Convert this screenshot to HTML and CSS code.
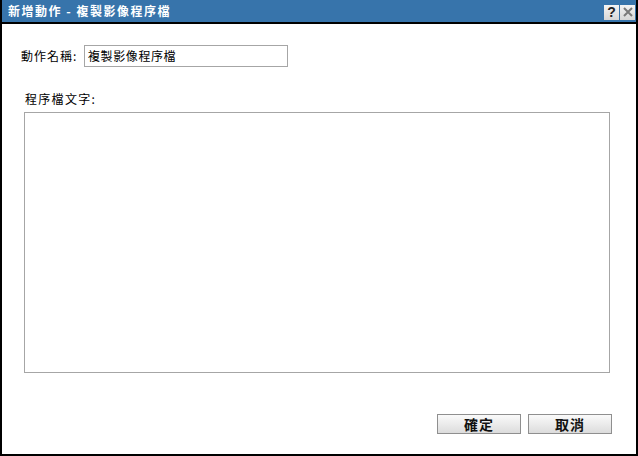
FILE: index.html
```html
<!DOCTYPE html>
<html>
<head>
<meta charset="utf-8">
<link rel="stylesheet" href="styles.css">
</head>
<body>
<div class="dialog">
  <div class="titlebar">
    <span class="title">新增動作 - 複製影像程序檔</span>
    <div class="tools">
      <span class="tool help">?</span>
      <span class="tool close"><svg width="12" height="12" viewBox="0 0 12 12"><path d="M2 2 L10 10 M10 2 L2 10" stroke="#7a7a7a" stroke-width="2" fill="none"/></svg></span>
    </div>
  </div>
  <div class="content">
    <div class="row">
      <label class="label">動作名稱:</label>
      <div class="input">複製影像程序檔</div>
    </div>
    <div class="label2">程序檔文字:</div>
    <div class="textarea"></div>
    <div class="buttons">
      <button class="btn">確定</button>
      <button class="btn">取消</button>
    </div>
  </div>
</div>
</body>
</html>
```
FILE: styles.css
```css
html, body {
  margin: 0;
  padding: 0;
  background: #fff;
}
body {
  font-family: "Noto Sans CJK TC", "Liberation Sans", sans-serif;
  font-size: 12px;
  color: #000;
}
.dialog {
  box-sizing: border-box;
  width: 638px;
  height: 456px;
  border-left: 2px solid #000;
  border-right: 2px solid #000;
  border-bottom: 2px solid #000;
  display: flex;
  flex-direction: column;
  background: #fff;
}
.titlebar {
  height: 22px;
  background: #3774ab;
  border-bottom: 2px solid #000;
  display: flex;
  align-items: center;
  justify-content: space-between;
  padding-left: 6px;
  padding-right: 1px;
  flex: none;
}
.title {
  color: #fff;
  font-weight: bold;
  font-size: 12px;
  line-height: 14px;
  letter-spacing: 1.5px;
}
.tools {
  display: flex;
  gap: 1px;
  margin-top: 2px;
}
.tool {
  width: 15px;
  height: 15px;
  background: linear-gradient(#f4f4f4, #d6d6d6);
  display: flex;
  align-items: center;
  justify-content: center;
  box-sizing: border-box;
}
.help {
  font-family: "Liberation Sans", sans-serif;
  font-weight: bold;
  font-size: 14px;
  color: #222;
  line-height: 14px;
}
.content {
  flex: 1;
  display: flex;
  flex-direction: column;
  padding: 21px 24px 0 19px;
}
.row {
  display: flex;
  align-items: center;
  height: 22px;
}
.label {
  width: 63px;
  line-height: 14px;
  letter-spacing: 1px;
}
.input {
  box-sizing: border-box;
  width: 204px;
  height: 22px;
  border: 1px solid #a6a6a6;
  padding: 0 3px;
  line-height: 20px;
  letter-spacing: 0.6px;
}
.label2 {
  margin-top: 25px;
  margin-left: 4px;
  line-height: 14px;
  letter-spacing: 1.3px;
}
.textarea {
  box-sizing: border-box;
  margin-top: 6px;
  margin-left: 3px;
  width: 586px;
  height: 261px;
  border: 1px solid #a6a6a6;
}
.buttons {
  display: flex;
  justify-content: flex-end;
  gap: 7px;
  margin-top: 41px;
}
.btn {
  box-sizing: border-box;
  width: 84px;
  height: 20px;
  border: 1px solid #8f8f8f;
  background: linear-gradient(#fafafa, #dcdcdc);
  font-family: "Noto Sans CJK TC", sans-serif;
  font-weight: bold;
  font-size: 14px;
  line-height: 16px;
  padding: 0;
  color: #111;
  letter-spacing: 1px;
}
```
